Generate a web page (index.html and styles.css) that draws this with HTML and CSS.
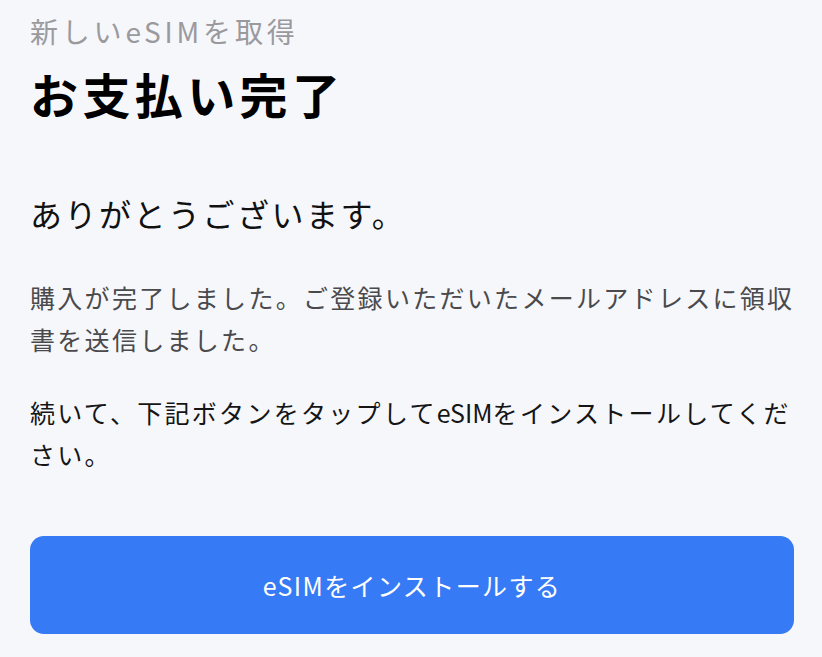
FILE: index.html
```html
<!DOCTYPE html>
<html lang="ja">
<head>
    <meta charset="UTF-8">
    <meta name="viewport" content="width=device-width, initial-scale=1.0">
    <title>お支払い完了</title>
    <link rel="stylesheet" href="styles.css">
</head>
<body>
    <div class="page">
        <div class="eyebrow">新しいeSIMを取得</div>
        <h1 class="title">お支払い完了</h1>

        <div class="thanks">ありがとうございます。</div>

        <p class="note">購入が完了しました。ご登録いただいたメールアドレスに領収書を送信しました。</p>
        <p class="next">続いて、下記ボタンをタップして<span class="latin">eSIM</span>をインストールしてください。</p>

        <button class="install" type="button">eSIMをインストールする</button>
    </div>
</body>
</html>
```

FILE: styles.css
```css
body {
    margin: 0;
    background: #f6f7fb;
    font-family: "Noto Sans CJK JP", "Noto Sans", sans-serif;
    color: #111;
}
.page {
    padding: 12px 28px 0 30px;
}
.eyebrow {
    font-size: 28px;
    line-height: 39px;
    letter-spacing: 3.8px;
    color: #9a9a9e;
}
.title {
    margin: 11px 0 0;
    font-size: 48px;
    line-height: 62px;
    letter-spacing: 4.4px;
    font-weight: 700;
    color: #000;
}
.thanks {
    margin-top: 67px;
    font-size: 32px;
    line-height: 45px;
    letter-spacing: 2.5px;
    color: #111;
}
.note,
.next {
    font-size: 25px;
    line-height: 42px;
    letter-spacing: 2.3px;
    margin: 40px -18px 0 0;
}
.note {
    color: #4a4a4c;
}
.next {
    margin-top: 31px;
    color: #151515;
}
.latin {
    letter-spacing: 0;
}
.install {
    display: block;
    width: 100%;
    height: 98px;
    margin-top: 61px;
    border: none;
    border-radius: 14px;
    background: #377af5;
    color: #fff;
    font-family: inherit;
    font-size: 25px;
    letter-spacing: 1.4px;
}
```
